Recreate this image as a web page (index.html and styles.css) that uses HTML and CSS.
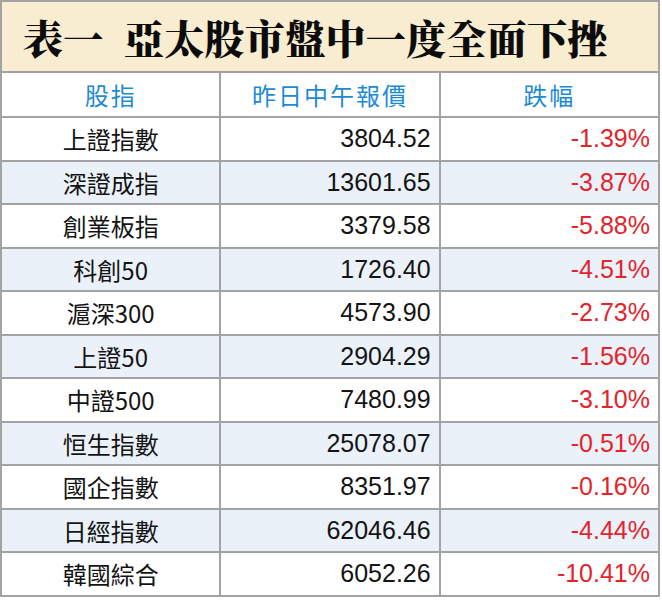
FILE: index.html
```html
<!DOCTYPE html>
<html lang="zh-Hant">
<head>
<meta charset="utf-8">
<link rel="stylesheet" href="styles.css">
</head>
<body>
<table class="board">
  <tr class="title-row"><td colspan="3" class="title">表一&nbsp;&nbsp;亞太股市盤中一度全面下挫</td></tr>
  <tr class="head-row"><th>股指</th><th>昨日中午報價</th><th>跌幅</th></tr>
  <tr class="row"><td class="name">上證指數</td><td class="num">3804.52</td><td class="pct">-1.39%</td></tr>
  <tr class="row alt"><td class="name">深證成指</td><td class="num">13601.65</td><td class="pct">-3.87%</td></tr>
  <tr class="row"><td class="name">創業板指</td><td class="num">3379.58</td><td class="pct">-5.88%</td></tr>
  <tr class="row alt"><td class="name">科創50</td><td class="num">1726.40</td><td class="pct">-4.51%</td></tr>
  <tr class="row"><td class="name">滬深300</td><td class="num">4573.90</td><td class="pct">-2.73%</td></tr>
  <tr class="row alt"><td class="name">上證50</td><td class="num">2904.29</td><td class="pct">-1.56%</td></tr>
  <tr class="row"><td class="name">中證500</td><td class="num">7480.99</td><td class="pct">-3.10%</td></tr>
  <tr class="row alt"><td class="name">恒生指數</td><td class="num">25078.07</td><td class="pct">-0.51%</td></tr>
  <tr class="row"><td class="name">國企指數</td><td class="num">8351.97</td><td class="pct">-0.16%</td></tr>
  <tr class="row alt"><td class="name">日經指數</td><td class="num">62046.46</td><td class="pct">-4.44%</td></tr>
  <tr class="row"><td class="name">韓國綜合</td><td class="num">6052.26</td><td class="pct">-10.41%</td></tr>
</table>
</body>
</html>
```
FILE: styles.css
```css
html, body {
  margin: 0;
  padding: 0;
  background: #ffffff;
}
body {
  font-family: "Liberation Sans", "Noto Sans CJK TC", sans-serif;
  color: #141414;
}
.board {
  border-collapse: collapse;
  width: 660px;
  table-layout: fixed;
  border: 2px solid #9d9d9d;
}
.board td, .board th {
  border: 2px solid #a3a3a3;
  padding: 0 8px;
}
.title-row td {
  height: 69px;
  background: #f8ecd1;
  font-family: "Noto Serif CJK TC", "Noto Sans CJK TC", serif;
  font-weight: 900;
  font-size: 40px;
  color: #0c0c0c;
  padding: 0 0 0 21px;
  text-align: left;
  white-space: nowrap;
  letter-spacing: 0.3px;
}
.head-row th {
  height: 43px;
  font-family: "Noto Sans CJK TC", sans-serif;
  font-weight: 400;
  font-size: 24px;
  letter-spacing: 2px;
  color: #1d8ad4;
  text-align: center;
  background: #ffffff;
}
.row td {
  height: 41.5px;
  font-size: 25px;
}
.row.alt td {
  background: #ebf1f9;
}
.name {
  font-family: "Noto Sans CJK TC", sans-serif;
  text-align: center;
  font-size: 24px !important;
}
.num {
  text-align: right;
}
.pct {
  text-align: right;
  color: #e3242b;
}
```
